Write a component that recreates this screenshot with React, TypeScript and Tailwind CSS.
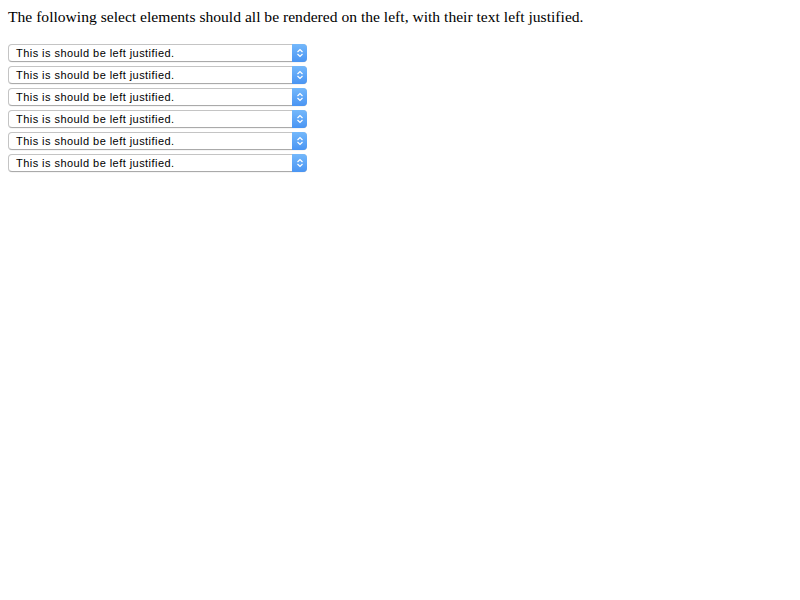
const rows = Array.from({ length: 6 })

const Chevrons = () => (
  <svg width="8" height="10" viewBox="0 0 8 10" fill="none">
    <path d="M1.5 4L4 1.5L6.5 4" stroke="white" strokeWidth="1.2" />
    <path d="M1.5 6L4 8.5L6.5 6" stroke="white" strokeWidth="1.2" />
  </svg>
)

const FakeSelect = () => (
  <div className="flex h-[18px] w-[299px] rounded-[4px] border border-[#c4c4c4] border-b-[#aaa] bg-white shadow-[0_0.5px_0.5px_rgba(0,0,0,0.08)]">
    <span className="flex-1 pl-[7px] text-[11px] leading-[16px] tracking-[0.45px] text-black font-['Liberation_Sans',Arial,sans-serif]">
      This is should be left justified.
    </span>
    <span className="-my-px -mr-px flex w-[15px] items-center justify-center rounded-r-[4px] bg-gradient-to-b from-[#74b8fb] to-[#4a95f3]">
      <Chevrons />
    </span>
  </div>
)

export default function App() {
  return (
    <div className="min-h-[600px] bg-white p-2 font-['Liberation_Serif','Times_New_Roman',serif] text-black">
      <p className="text-[15.6px] leading-[18px]">
        The following select elements should all be rendered on the left, with their text left justified.
      </p>
      <div className="mt-[18px] flex flex-col gap-1">
        {rows.map((_, i) => (
          <FakeSelect key={i} />
        ))}
      </div>
    </div>
  )
}
